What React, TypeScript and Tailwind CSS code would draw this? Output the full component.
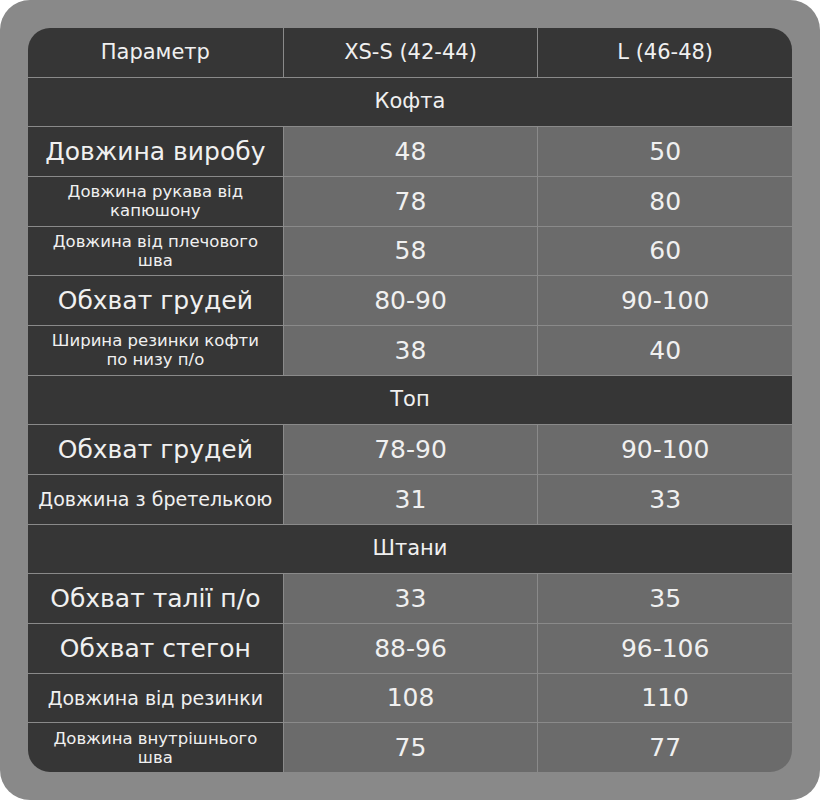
type Row =
  | { kind: 'section'; title: string }
  | { kind: 'data'; label: string[]; a: string; b: string; size: 'lg' | 'md' | 'sm' };

const rows: Row[] = [
  { kind: 'section', title: 'Кофта' },
  { kind: 'data', label: ['Довжина виробу'], a: '48', b: '50', size: 'lg' },
  { kind: 'data', label: ['Довжина рукава від', 'капюшону'], a: '78', b: '80', size: 'sm' },
  { kind: 'data', label: ['Довжина від плечового', 'шва'], a: '58', b: '60', size: 'sm' },
  { kind: 'data', label: ['Обхват грудей'], a: '80-90', b: '90-100', size: 'lg' },
  { kind: 'data', label: ['Ширина резинки кофти', 'по низу п/о'], a: '38', b: '40', size: 'sm' },
  { kind: 'section', title: 'Топ' },
  { kind: 'data', label: ['Обхват грудей'], a: '78-90', b: '90-100', size: 'lg' },
  { kind: 'data', label: ['Довжина з бретелькою'], a: '31', b: '33', size: 'md' },
  { kind: 'section', title: 'Штани' },
  { kind: 'data', label: ['Обхват талії п/о'], a: '33', b: '35', size: 'lg' },
  { kind: 'data', label: ['Обхват стегон'], a: '88-96', b: '96-106', size: 'lg' },
  { kind: 'data', label: ['Довжина від резинки'], a: '108', b: '110', size: 'md' },
  { kind: 'data', label: ['Довжина внутрішнього', 'шва'], a: '75', b: '77', size: 'sm' },
];

const labelCls = {
  lg: 'text-[25px]',
  md: 'text-[19px]',
  sm: 'text-[16.5px] leading-[19px]',
};

export default function App() {
  return (
    <div
      className="w-[820px] h-[800px] bg-white"
      style={{ fontFamily: '"DejaVu Sans", "Open Sans", sans-serif' }}
    >
      <div className="w-full h-full bg-[#898989] rounded-[30px] p-[28px]">
        <div className="w-full h-full rounded-[22px] overflow-hidden flex flex-col text-[#f0f0f0]">
          {/* header */}
          <div className="flex-1 grid grid-cols-3 bg-[#363636] text-[21px]">
            <div className="flex items-center justify-center">Параметр</div>
            <div className="flex items-center justify-center border-l border-[#8a8a8a]">XS-S (42-44)</div>
            <div className="flex items-center justify-center border-l border-[#8a8a8a]">L (46-48)</div>
          </div>

          {rows.map((r, i) =>
            r.kind === 'section' ? (
              <div
                key={i}
                className="flex-1 flex items-center justify-center bg-[#363636] border-t border-[#8a8a8a] text-[21px]"
              >
                {r.title}
              </div>
            ) : (
              <div key={i} className="flex-1 grid grid-cols-3 border-t border-[#8a8a8a]">
                <div
                  className={`flex flex-col items-center justify-center bg-[#363636] text-center whitespace-nowrap ${labelCls[r.size]}`}
                >
                  {r.label.map((l) => (
                    <span key={l}>{l}</span>
                  ))}
                </div>
                <div className="flex items-center justify-center bg-[#6b6b6b] border-l border-[#8a8a8a] text-[25px]">
                  {r.a}
                </div>
                <div className="flex items-center justify-center bg-[#6b6b6b] border-l border-[#8a8a8a] text-[25px]">
                  {r.b}
                </div>
              </div>
            )
          )}
        </div>
      </div>
    </div>
  );
}
